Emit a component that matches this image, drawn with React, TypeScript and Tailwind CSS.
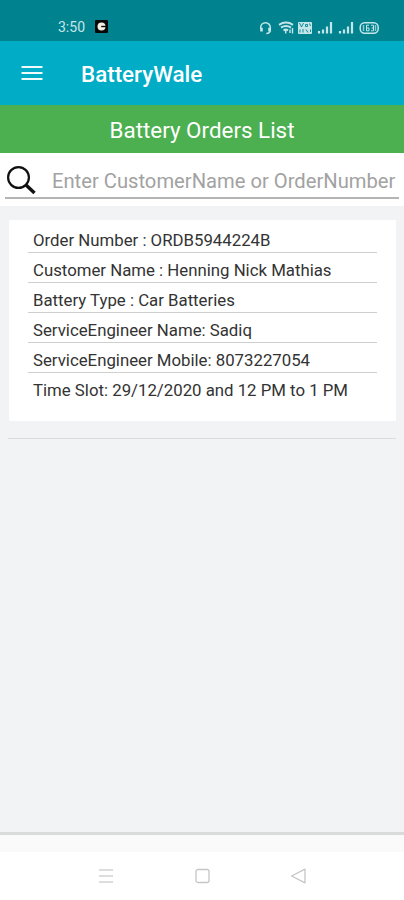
import * as React from 'react';

interface Order {
  orderNumber: string;
  customerName: string;
  batteryType: string;
  engineerName: string;
  engineerMobile: string;
  timeSlot: string;
}

const orders: Order[] = [
  {
    orderNumber: 'ORDB5944224B',
    customerName: 'Henning Nick Mathias',
    batteryType: 'Car Batteries',
    engineerName: 'Sadiq',
    engineerMobile: '8073227054',
    timeSlot: '29/12/2020 and 12 PM to 1 PM',
  },
];

export default function App() {
  const [query, setQuery] = React.useState('');

  const results = React.useMemo(() => {
    const q = query.trim().toLowerCase();
    return orders.filter(
      (o) => o.customerName.toLowerCase().includes(q) || o.orderNumber.toLowerCase().includes(q)
    );
  }, [query]);

  return (
    <div className="flex h-[900px] w-[404px] flex-col overflow-hidden bg-white font-['Roboto',sans-serif]">
      <StatusBar />
      <header className="flex h-16 shrink-0 items-center bg-[#00acc6] pl-[21px] text-white">
        <button aria-label="Open menu">
          <svg width="22" height="16" viewBox="0 0 22 16" fill="none" stroke="#f0fbfc" strokeWidth="2">
            <path d="M0.5 2h21M0.5 8h21M0.5 14h21" />
          </svg>
        </button>
        <h1 className="ml-[38px] pt-px text-[22.4px] leading-7 font-medium">BatteryWale</h1>
      </header>
      <h2 className="flex h-12 shrink-0 items-center justify-center bg-[#4caf50] pt-[3px] text-[22.4px] leading-[33px] text-white">
        Battery Orders List
      </h2>
      <SearchField value={query} onChange={setQuery} />
      <main className="flex-1 bg-[#f1f3f5] pt-3.5">
        {results.map((order) => (
          <div key={order.orderNumber} className="mx-2 border-b border-[#dadcde] pb-[17px]">
            <OrderCard order={order} />
          </div>
        ))}
      </main>
      <div className="h-[20px] shrink-0 border-t-[3px] border-[#d9dada] bg-[#fafafa]" />
      <NavigationBar />
    </div>
  );
}

function SearchField({ value, onChange }: { value: string; onChange: (value: string) => void }) {
  return (
    <div className="h-[53px] shrink-0 bg-white px-[5px]">
      <label className="flex h-[46px] items-center border-b-2 border-[#b4b4b4]">
        <svg className="mt-2.5 ml-0.5 shrink-0" width="29" height="29" viewBox="0 0 29 29" fill="none" stroke="#111">
          <circle cx="11.5" cy="11.5" r="10.4" strokeWidth="2.2" />
          <path d="M18.5 18.5L27.5 27" strokeWidth="3.4" />
        </svg>
        <input
          className="ml-4 min-w-0 flex-1 pt-3 text-[20.2px] leading-7 outline-none placeholder:text-[#a2a2a2]"
          placeholder="Enter CustomerName or OrderNumber"
          value={value}
          onChange={(e) => onChange(e.target.value)}
        />
      </label>
    </div>
  );
}

function OrderCard({ order }: { order: Order }) {
  const rows = [
    `Order Number : ${order.orderNumber}`,
    `Customer Name : ${order.customerName}`,
    `Battery Type : ${order.batteryType}`,
    `ServiceEngineer Name: ${order.engineerName}`,
    `ServiceEngineer Mobile: ${order.engineerMobile}`,
    `Time Slot: ${order.timeSlot}`,
  ];

  return (
    <ul className="ml-px h-[201px] bg-white px-[19px] pt-[3px]">
      {rows.map((row) => (
        <li
          key={row}
          className="flex h-[30px] items-end border-b border-[#cfcfcf] pb-px pl-[5px] text-[16.8px] leading-[21px] whitespace-nowrap text-[#333] last:border-transparent"
        >
          {row}
        </li>
      ))}
    </ul>
  );
}

function StatusBar() {
  return (
    <div className="flex h-[41px] shrink-0 items-end justify-between bg-[#00838f] pr-[23px] pb-[6px] pl-[58px] text-[#c4e6e8]">
      <div className="flex items-center gap-[10px]">
        <span className="pt-px text-[14px] leading-4">3:50</span>
        <svg width="13" height="13" viewBox="0 0 13 13">
          <rect width="13" height="13" rx="1" fill="#080808" />
          <circle cx="6.5" cy="6.5" r="4" fill="#f3eee4" />
          <path d="M6.2 6.5h5" stroke="#080808" strokeWidth="1.4" />
        </svg>
      </div>
      <div className="flex items-center">
        <svg width="122" height="14" viewBox="0 0 122 14" fill="none" stroke="currentColor">
          {/* headset */}
          <path d="M1.700 8V6.500a4.800 4.800 0 0 1 9.600 0v2.500c0 2-1 3.400-4 3.400" strokeWidth="1.500" />
          <path d="M2.500 6.800v3.800M10.500 6.800v3.800" strokeWidth="2.600" />
          {/* wifi */}
          <path d="M20 3.800q7-4.500 14 0M22 6.700q5-3.200 10 0M24.500 9.500q2.500-1.700 4.500 0" strokeWidth="2" />
          <path d="M26.700 9v3.500M31 8.500v3.500M33.500 7v5.500" strokeWidth="1.400" />
          {/* volte */}
          <rect x="39" y="1" width="14" height="12" rx="1" fill="currentColor" stroke="none" />
          <path d="M40.500 2l2 4 2-4M46.500 3.500h2v2h-2zM50.500 2.500l1 2.500M41 8.500v3M44 8v3.500M47 8.500l2 3M51.500 8.500v2.500" stroke="#00838f" strokeWidth="0.900" />
          {/* signal bars */}
          <path d="M60 10v2.500M64 8.500v4M68 5.500v7M72 1v11.500M81 10v2.500M85 8.500v4M89 5.500v7M93 1v11.500" strokeWidth="2.200" />
          {/* battery */}
          <rect x="101.200" y="1.700" width="18" height="10.600" rx="4.500" strokeWidth="1.500" />
          <path d="M104.500 4v6M116.500 4v6" strokeWidth="1.500" strokeOpacity="0.700" />
          <path d="M110 4.200h-2.500v5.600h2.500v-2.800h-2M112 4.200h2.500v5.600h-2.500M112.500 7h2" strokeWidth="1" />
        </svg>
      </div>
    </div>
  );
}

function NavigationBar() {
  return (
    <nav className="flex h-12 shrink-0 items-center justify-center gap-[80px] bg-white">
      <button aria-label="Recent apps">
        <svg width="16" height="16" viewBox="0 0 16 16" fill="none" stroke="#d2d2d2" strokeWidth="1.300">
          <path d="M1 2h14M1 8h14M1 14h14" />
        </svg>
      </button>
      <button aria-label="Home">
        <svg width="16" height="16" viewBox="0 0 16 16" fill="none" stroke="#c6c6c6" strokeWidth="1.300">
          <rect x="2" y="1.500" width="13" height="13" rx="2" />
        </svg>
      </button>
      <button aria-label="Back">
        <svg width="16" height="16" viewBox="0 0 16 16" fill="none" stroke="#c6c6c6" strokeWidth="1.300" strokeLinejoin="round">
          <path d="M15 1.200v13.600L1.600 8z" />
        </svg>
      </button>
    </nav>
  );
}
